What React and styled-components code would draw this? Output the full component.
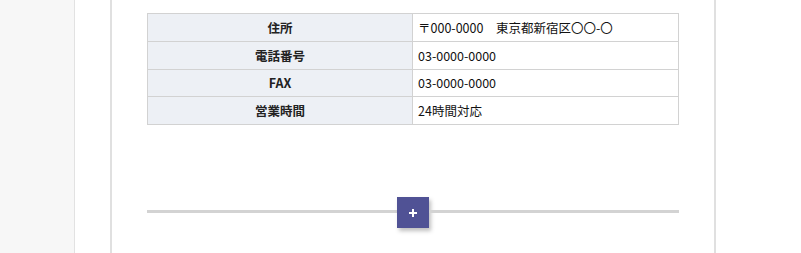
import React from "react";
import styled, { createGlobalStyle } from "styled-components";

const GlobalStyle = createGlobalStyle`
  html, body {
    margin: 0;
    padding: 0;
    background: #ffffff;
    font-family: "Noto Sans CJK JP", "Noto Sans", sans-serif;
    color: #222;
  }
`;

const Page = styled.div`
  display: flex;
  height: 253px;
  overflow: hidden;
`;

const Side = styled.div`
  width: 74px;
  flex-shrink: 0;
  background-color: #f7f7f7;
  border-right: 1px solid #e2e2e2;
`;

const Main = styled.div`
  flex: 1;
  padding-left: 35px;
  display: flex;
  align-items: flex-start;
`;

const Panel = styled.div`
  width: 532px;
  height: 253px;
  border-left: 2px solid #e0e0e0;
  border-right: 2px solid #e0e0e0;
  padding: 13px 35px 0 35px;
`;

const Table = styled.table`
  width: 532px;
  border-collapse: collapse;
  font-size: 12.5px;
  table-layout: fixed;
`;

const Th = styled.th`
  width: 264px;
  height: 26.75px;
  padding: 0;
  background-color: #edf0f5;
  border: 1px solid #d2d2d2;
  font-weight: bold;
  text-align: center;
  color: #222;
`;

const Td = styled.td`
  height: 26.75px;
  padding: 0 0 0 5px;
  border: 1px solid #d2d2d2;
  color: #111;
  white-space: pre;
`;

const Divider = styled.div`
  display: flex;
  align-items: center;
  margin-top: 69px;
`;

const Rule = styled.div`
  flex: 1;
  height: 3px;
  background-color: #d3d3d3;
`;

const AddButton = styled.button`
  width: 32px;
  height: 31px;
  margin-top: 3px;
  padding: 0;
  border: none;
  background-color: #505295;
  box-shadow: 2px 3px 4px rgba(0, 0, 0, 0.25);
  display: flex;
  align-items: center;
  justify-content: center;
  cursor: pointer;
`;

const rows = [
  ["住所", "〒000-0000　東京都新宿区〇〇-〇"],
  ["電話番号", "03-0000-0000"],
  ["FAX", "03-0000-0000"],
  ["営業時間", "24時間対応"],
];

export default function App() {
  return (
    <>
      <GlobalStyle />
      <Page>
        <Side />
        <Main>
          <Panel>
            <Table>
              <tbody>
                {rows.map(([label, value]) => (
                  <tr key={label}>
                    <Th>{label}</Th>
                    <Td>{value}</Td>
                  </tr>
                ))}
              </tbody>
            </Table>
            <Divider>
              <Rule />
              <AddButton aria-label="追加">
                <svg width="10" height="10" viewBox="0 0 10 10">
                  <path d="M5 1v8M1 5h8" stroke="#fff" strokeWidth="2" />
                </svg>
              </AddButton>
              <Rule />
            </Divider>
          </Panel>
        </Main>
      </Page>
    </>
  );
}
